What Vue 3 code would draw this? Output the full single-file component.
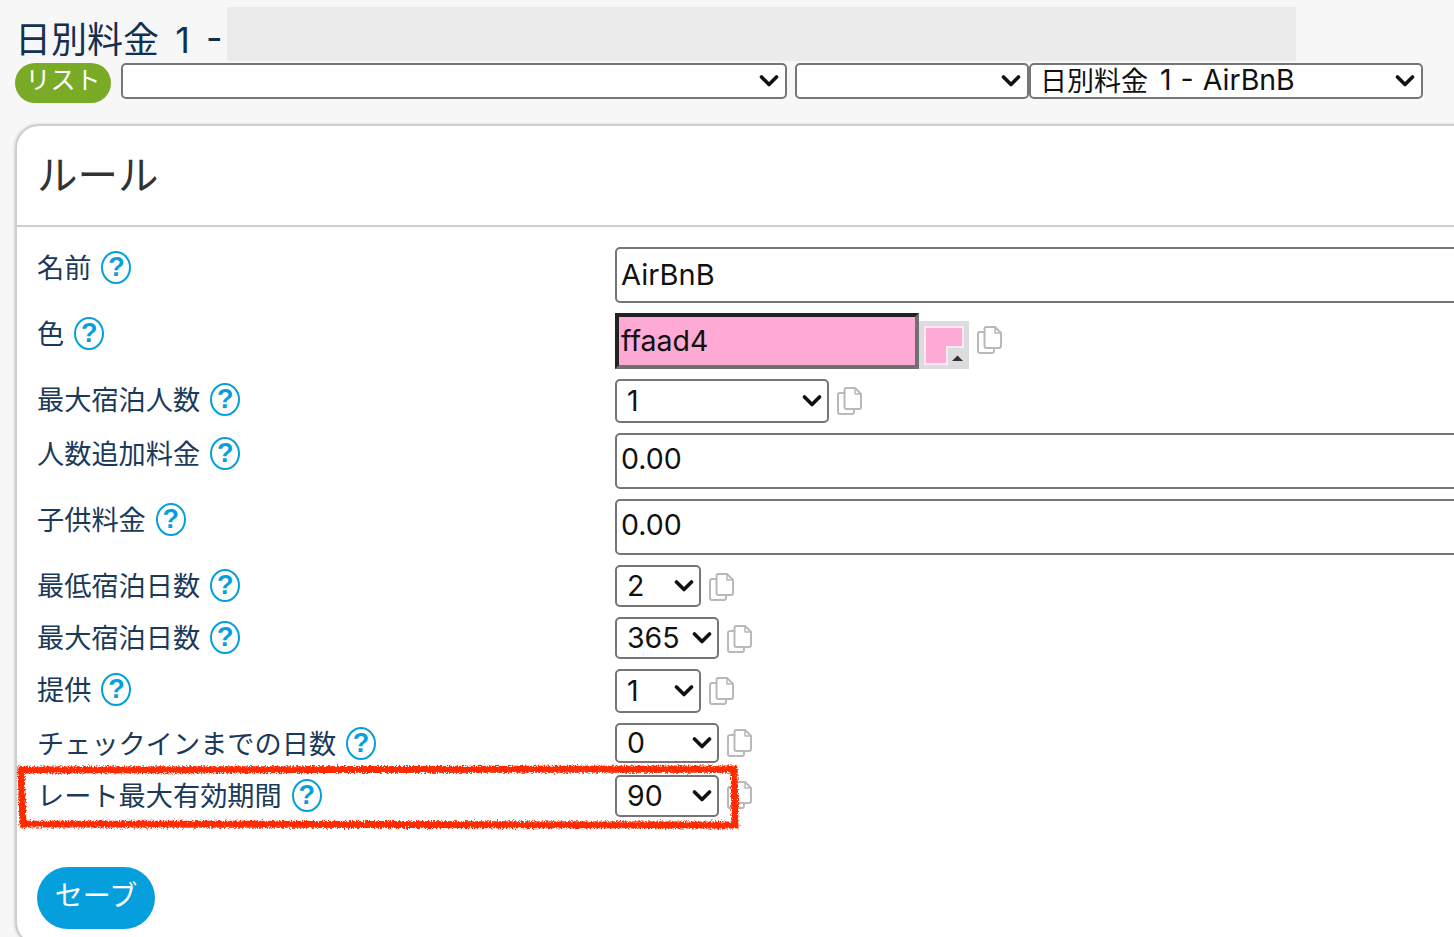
<script setup>
const sansStack = '"Inter", "Noto Sans CJK JP", sans-serif'

const rows = [
  { label: '名前', type: 'text', value: 'AirBnB', height: 56, control: 56, wide: true },
  { label: '色', type: 'color', value: 'ffaad4', height: 56, control: 56 },
  { label: '最大宿泊人数', type: 'select', value: '1', height: 44, control: 44, width: 214 },
  { label: '人数追加料金', type: 'text', value: '0.00', height: 56, control: 56 },
  { label: '子供料金', type: 'text', value: '0.00', height: 56, control: 56 },
  { label: '最低宿泊日数', type: 'select', value: '2', height: 42, control: 42, width: 86 },
  { label: '最大宿泊日数', type: 'select', value: '365', height: 42, control: 42, width: 104 },
  { label: '提供', type: 'select', value: '1', height: 44, control: 44, width: 86 },
  { label: 'チェックインまでの日数', type: 'select', value: '0', height: 42, control: 40, width: 104, raised: true },
  { label: 'レート最大有効期間', type: 'select', value: '90', height: 42, control: 42, width: 104, raised: true }
]
</script>

<template>
  <div class="page" :style="{ fontFamily: sansStack }">
    <div class="title-row">
      <h1 class="title">日別料金 1 -</h1>
      <div class="title-box"></div>
    </div>

    <div class="nav-row">
      <button class="list-pill">リスト</button>

      <div class="select-wrap gap-right nav-wide">
        <select class="select"><option></option></select>
        <svg class="chevron" viewBox="0 0 20 14" aria-hidden="true">
          <polyline points="2.5,3 10,10.5 17.5,3" />
        </svg>
      </div>

      <div class="select-wrap nav-mid">
        <select class="select"><option></option></select>
        <svg class="chevron" viewBox="0 0 20 14" aria-hidden="true">
          <polyline points="2.5,3 10,10.5 17.5,3" />
        </svg>
      </div>

      <div class="select-wrap nav-last">
        <div class="select select-display" role="combobox">
          <span class="display-jp">日別料金</span>
          <span class="display-latin">1 - AirBnB</span>
        </div>
        <svg class="chevron" viewBox="0 0 20 14" aria-hidden="true">
          <polyline points="2.5,3 10,10.5 17.5,3" />
        </svg>
      </div>
    </div>

    <section class="panel">
      <h2 class="panel-title">ルール</h2>

      <form class="form" @submit.prevent>
        <div
          v-for="row in rows"
          :key="row.label"
          class="row"
          :style="{ height: row.height + 'px' }"
        >
          <div class="label">
            <span class="label-text">{{ row.label }}</span>
            <span class="help">?</span>
          </div>

          <div class="control">
            <input
              v-if="row.type === 'text'"
              class="text-input"
              :class="{ 'text-input-wide': row.wide }"
              type="text"
              :value="row.value"
              :style="{ height: row.control + 'px' }"
            />

            <template v-else-if="row.type === 'color'">
              <input class="color-input" type="text" :value="row.value" />
              <div class="swatch">
                <svg viewBox="0 0 50 48" aria-hidden="true">
                  <polygon class="swatch-fill" points="6,6 44,6 44,26 28,26 28,43 6,43" />
                  <polygon class="swatch-arrow" points="33,40 38.500,34.500 44,40" />
                </svg>
              </div>
            </template>

            <div
              v-else
              class="select-wrap"
              :style="{ width: row.width + 'px', height: row.control + 'px' }"
            >
              <select class="select form-select">
                <option>{{ row.value }}</option>
              </select>
              <svg class="chevron chevron-form" viewBox="0 0 20 14" aria-hidden="true">
                <polyline points="2.5,3 10,10.5 17.5,3" />
              </svg>
            </div>

            <svg
              v-if="row.type !== 'text'"
              class="copy"
              :class="{ 'copy-raised': row.raised }"
              viewBox="0 0 25 28"
              aria-hidden="true"
            >
              <path d="M7.500 6H3a2 2 0 0 0-2 2v17a2 2 0 0 0 2 2h12a2 2 0 0 0 2-2v-3" />
              <path d="M9.500 1H18l6 6v13a2 2 0 0 1-2 2H9.500a2 2 0 0 1-2-2V3a2 2 0 0 1 2-2z" />
              <path class="copy-fold" d="M18 1v6h6" />
            </svg>
          </div>
        </div>

        <button class="save" type="submit">セーブ</button>
      </form>

      <svg class="annotation" viewBox="0 0 730 70" aria-hidden="true">
        <defs>
          <filter id="rough" x="-2%" y="-20%" width="104%" height="140%">
            <feTurbulence type="fractalNoise" baseFrequency="0.7" numOctaves="2" seed="4" />
            <feDisplacementMap in="SourceGraphic" scale="6" />
          </filter>
        </defs>
        <path d="M4 5 L717 4 L718 60 L6 59 Z" filter="url(#rough)" />
      </svg>
    </section>
  </div>
</template>

<style scoped>
.page {
  box-sizing: border-box;
  width: 100%;
  height: 937px;
  overflow: hidden;
  padding: 7px 0 0 15px;
  background: #f7f7f7;
  color: #12304f;
}

.title-row {
  display: flex;
  height: 54px;
}

.title {
  box-sizing: border-box;
  width: 212px;
  margin: 0;
  font-size: 36px;
  font-weight: 400;
  line-height: 66px;
  white-space: pre;
  word-spacing: 6px;
}

.title-box {
  width: 1069px;
  height: 54px;
  background: #ebebeb;
}

.nav-row {
  display: flex;
  align-items: flex-start;
  margin-top: 2px;
}

.list-pill {
  width: 96px;
  height: 40px;
  margin-right: 10px;
  padding: 0 0 5px;
  border: 0;
  border-radius: 20px;
  background: #7aab27;
  color: #fff;
  font-family: inherit;
  font-size: 25px;
  line-height: 1;
}

.select-wrap {
  position: relative;
  flex: none;
  height: 36px;
}

.nav-wide {
  width: 666px;
}

.nav-mid {
  width: 234px;
}

.nav-last {
  width: 394px;
}

.gap-right {
  margin-right: 8px;
}

.select {
  display: block;
  box-sizing: border-box;
  width: 100%;
  height: 100%;
  border: 2px solid #767676;
  border-radius: 5px;
  background: #fff;
  color: #111;
  font-family: inherit;
  appearance: none;
  outline: none;
}

.select-display {
  display: flex;
  align-items: center;
  gap: 12px;
  padding: 0 0 4px 9px;
  white-space: nowrap;
}

.display-jp {
  font-size: 27px;
}

.display-latin {
  font-size: 28.500px;
  word-spacing: 1px;
}

.form-select {
  padding: 0 0 2px 10px;
  font-size: 28.500px;
}

.chevron {
  position: absolute;
  top: 50%;
  right: 8px;
  width: 20px;
  height: 14px;
  transform: translateY(-50%);
  pointer-events: none;
}

.chevron-form {
  right: 7px;
}

.chevron polyline {
  fill: none;
  stroke: #111;
  stroke-width: 3.600;
  stroke-linecap: round;
  stroke-linejoin: round;
}

.panel {
  position: relative;
  box-sizing: border-box;
  width: 1500px;
  height: 822px;
  margin: 21px 0 0;
  border: 2px solid #cdcdcd;
  border-radius: 24px;
  background: #fff;
  box-shadow: -1px 0 3px rgba(0, 0, 0, 0.12);
}

.panel-title {
  box-sizing: border-box;
  height: 101px;
  margin: 0;
  padding-left: 20px;
  border-bottom: 2px solid #cdcdcd;
  color: #333;
  font-size: 40.500px;
  font-weight: 400;
  line-height: 100px;
}

.form {
  padding: 20px 0 0 20px;
}

.row {
  display: flex;
  margin-bottom: 10px;
}

.label {
  display: flex;
  flex: none;
  align-items: center;
  gap: 10px;
  width: 578px;
  height: 40px;
  color: #1b3a5a;
  font-size: 27.200px;
  white-space: nowrap;
}

.label-text {
  margin-top: -3px;
}

.help {
  display: flex;
  box-sizing: border-box;
  align-items: center;
  justify-content: center;
  width: 30px;
  height: 33px;
  border: 2px solid #049fdc;
  border-radius: 50%;
  color: #049fdc;
  font-family: "Liberation Sans", sans-serif;
  font-size: 27px;
  font-weight: 700;
  line-height: 1;
}

.control {
  display: flex;
  align-items: flex-start;
  flex: 1;
}

.text-input {
  box-sizing: border-box;
  width: 860px;
  padding: 0 0 5px 4px;
  border: 2px solid #767676;
  border-radius: 5px;
  background: #fff;
  color: #111;
  font-family: inherit;
  font-size: 28.500px;
  outline: none;
}

.text-input-wide {
  padding-bottom: 2px;
  font-size: 29px;
}

.color-input {
  box-sizing: border-box;
  width: 304px;
  height: 56px;
  padding: 0 0 2px 2px;
  border-width: 4px;
  border-style: solid;
  border-color: #222 #707070 #707070 #222;
  background: #ffaad4;
  color: #111;
  font-family: inherit;
  font-size: 28.500px;
  outline: none;
}

.swatch {
  box-sizing: border-box;
  width: 50px;
  height: 48px;
  margin: 8px 8px 0 0;
  background: #dcdcdc;
}

.swatch svg {
  display: block;
  width: 50px;
  height: 48px;
}

.swatch-fill {
  fill: #ffaad4;
  stroke: #ffe8f3;
  stroke-width: 2;
}

.swatch-arrow {
  fill: #333;
}

.copy {
  flex: none;
  width: 25px;
  height: 28px;
  margin: 8px 0 0 8px;
  fill: none;
  stroke: #b9b9b9;
  stroke-width: 2;
  stroke-linejoin: round;
  stroke-linecap: round;
}

.copy-raised {
  margin-top: 6px;
}

.copy-fold {
  stroke-width: 1.500;
}

.swatch + .copy {
  margin-left: 0;
  margin-top: 13px;
}

.save {
  display: block;
  width: 118px;
  height: 62px;
  margin-top: 50px;
  padding: 0 0 4px;
  border: 0;
  border-radius: 31px;
  background: #049fdc;
  color: #fff;
  font-family: inherit;
  font-size: 28px;
  line-height: 1;
}

.annotation {
  position: absolute;
  top: 639px;
  left: 0;
  width: 730px;
  height: 70px;
  overflow: visible;
  pointer-events: none;
}

.annotation path {
  fill: none;
  stroke: #ff2a00;
  stroke-width: 7;
}
</style>

<style>
html,
body {
  margin: 0;
  overflow: hidden;
  background: #f7f7f7;
}
</style>
